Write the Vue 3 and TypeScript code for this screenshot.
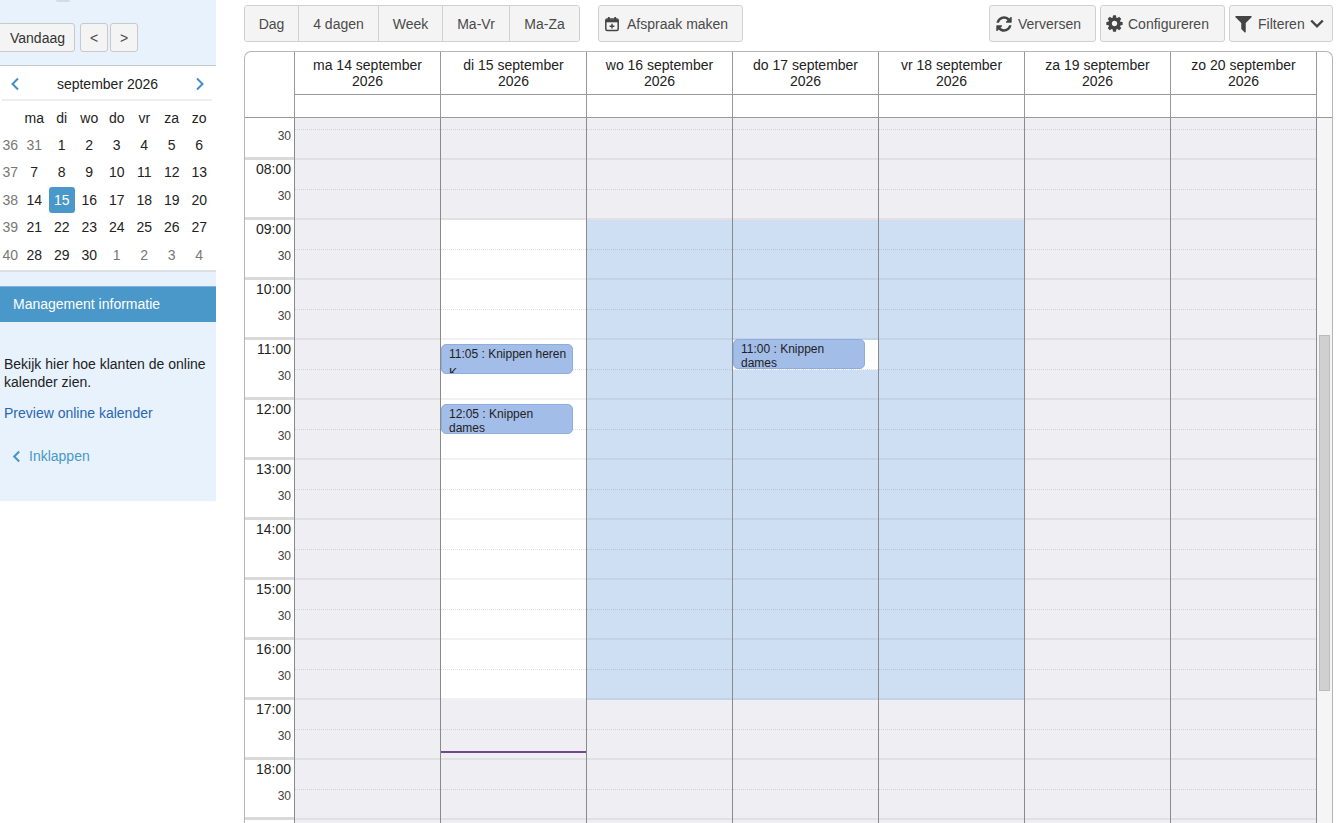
<script setup lang="ts">
type Kind = 'off' | 'work' | 'busy'
interface Ev { top: number; height: number; text: string; extra?: string }

const weekRows = [
  { wk: 36, days: [[31, 1], [1, 0], [2, 0], [3, 0], [4, 0], [5, 0], [6, 0]] },
  { wk: 37, days: [[7, 0], [8, 0], [9, 0], [10, 0], [11, 0], [12, 0], [13, 0]] },
  { wk: 38, days: [[14, 0], [15, 0], [16, 0], [17, 0], [18, 0], [19, 0], [20, 0]] },
  { wk: 39, days: [[21, 0], [22, 0], [23, 0], [24, 0], [25, 0], [26, 0], [27, 0]] },
  { wk: 40, days: [[28, 0], [29, 0], [30, 0], [1, 1], [2, 1], [3, 1], [4, 1]] },
]
const dayNames = ['ma', 'di', 'wo', 'do', 'vr', 'za', 'zo']
const viewButtons = ['Dag', '4 dagen', 'Week', 'Ma-Vr', 'Ma-Za']
const viewWidths = [54, 80, 64, 67, 69]

const columns = ['ma 14', 'di 15', 'wo 16', 'do 17', 'vr 18', 'za 19', 'zo 20']

const slots: number[] = []
for (let i = 14; i < 39; i++) slots.push(i)

const hourLabels: { label: string; half: boolean }[] = slots.map((s) => ({
  label: s === 14 || s === 38 ? '' : s % 2 === 0 ? `${String(s / 2).padStart(2, '0')}:00` : '30',
  half: s % 2 === 1,
}))

function kindOf(col: number, slot: number): Kind {
  const open = slot >= 18 && slot < 34
  if (!open) return 'off'
  if (col === 1) return 'work'
  if (col === 2 || col === 4) return 'busy'
  if (col === 3) return slot === 22 ? 'work' : 'busy'
  return 'off'
}

const events: Record<number, Ev[]> = {
  1: [
    { top: 244, height: 30, text: '11:05 : Knippen heren', extra: 'K' },
    { top: 304, height: 30, text: '12:05 : Knippen dames' },
  ],
  3: [{ top: 239, height: 30, text: '11:00 : Knippen dames' }],
}
</script>

<template>
  <div class="page">
    <aside class="side">
      <div class="side-top">
        <div class="stub"></div>
        <div class="nav-row">
          <button class="btn today">Vandaag</button>
          <button class="btn step">&lt;</button>
          <button class="btn step">&gt;</button>
        </div>
      </div>

      <div class="mini">
        <div class="mini-head">
          <svg class="arrow" viewBox="0 0 10 14"><path d="M8 1.500 2.500 7 8 12.500" /></svg>
          <span>september 2026</span>
          <svg class="arrow" viewBox="0 0 10 14"><path d="M2 1.500 7.500 7 2 12.500" /></svg>
        </div>
        <div class="mini-grid">
          <span></span>
          <span v-for="d in dayNames" :key="d" class="mini-cell">{{ d }}</span>
          <template v-for="r in weekRows" :key="r.wk">
            <span class="mini-cell wk">{{ r.wk }}</span>
            <span
              v-for="(d, i) in r.days"
              :key="i"
              class="mini-cell"
              :class="{ other: d[1] === 1, sel: d[0] === 15 }"
            >{{ d[0] }}</span>
          </template>
        </div>
      </div>

      <div class="mgmt">Management informatie</div>
      <div class="side-body">
        <p class="intro">Bekijk hier hoe klanten de online kalender zien.</p>
        <a class="preview">Preview online kalender</a>
        <div class="collapse">
          <svg class="arrow small" viewBox="0 0 10 14"><path d="M8 1.500 2.500 7 8 12.500" /></svg>
          <span>Inklappen</span>
        </div>
      </div>
    </aside>

    <main class="main">
      <div class="toolbar">
        <div class="group">
          <button
            v-for="(b, i) in viewButtons"
            :key="b"
            class="seg"
            :style="{ width: viewWidths[i] + 'px' }"
          >{{ b }}</button>
        </div>
        <button class="tool make">
          <svg class="ico" viewBox="0 0 16 16">
            <rect x="1.800" y="3" width="12.400" height="11.600" rx="1.500" fill="none" stroke="currentColor" stroke-width="1.500" />
            <path d="M1.800 3.500h12.400v2.800H1.800z" fill="currentColor" />
            <path d="M4.800 1v3M11.200 1v3" stroke="currentColor" stroke-width="1.800" />
            <path d="M8 7.800v4.800M5.600 10.200h4.800" stroke="currentColor" stroke-width="1.400" />
          </svg>
          Afspraak maken
        </button>
        <div class="spacer"></div>
        <button class="tool refresh">
          <svg class="ico" viewBox="0 0 1792 1792"><path fill="currentColor" d="M1639 1056q0 5-1 7-64 268-268 434.500t-478 166.500q-146 0-282.500-55t-243.500-157l-129 129q-19 19-45 19t-45-19-19-45v-448q0-26 19-45t45-19h448q26 0 45 19t19 45-19 45l-137 137q71 66 161 102t187 36q134 0 250-65t186-179q11-17 53-117 8-23 30-23h192q13 0 22.500 9.500t9.500 22.500zm25-800v448q0 26-19 45t-45 19h-448q-26 0-45-19t-19-45 19-45l138-138q-148-137-349-137-134 0-250 65t-186 179q-11 17-53 117-8 23-30 23h-199q-13 0-22.500-9.500t-9.500-22.500v-7q65-268 270-434.500t480-166.500q146 0 284 55.500t245 156.500l130-129q19-19 45-19t45 19 19 45z" /></svg>
          Verversen
        </button>
        <button class="tool config">
          <svg class="ico" viewBox="0 0 1792 1792"><path fill="currentColor" d="M1152 896q0-106-75-181t-181-75-181 75-75 181 75 181 181 75 181-75 75-181zm512-109v222q0 12-8 23t-20 13l-185 28q-19 54-39 91 35 50 107 138 10 12 10 25t-9 23q-27 37-99 108t-94 71q-12 0-26-9l-138-108q-44 23-91 38-16 136-29 186-7 28-36 28h-222q-14 0-24.500-8.500t-11.500-21.500l-28-184q-49-16-90-37l-141 107q-10 9-25 9-14 0-25-11-126-114-165-168-7-10-7-23 0-12 8-23 15-21 51-66.500t54-70.500q-27-50-41-99l-183-27q-13-2-21-12.500t-8-23.500v-222q0-12 8-23t19-13l186-28q14-46 39-92-40-57-107-138-10-12-10-24 0-10 9-23 26-36 98.500-107.500t94.500-71.500q13 0 26 10l138 107q44-23 91-38 16-136 29-186 7-28 36-28h222q14 0 24.500 8.500t11.500 21.500l28 184q49 16 90 37l142-107q9-9 24-9 13 0 25 10 129 119 165 170 7 8 7 22 0 12-8 23-15 21-51 66.500t-54 70.500q26 50 41 98l183 28q13 2 21 12.500t8 23.500z" /></svg>
          Configureren
        </button>
        <button class="tool filter">
          <svg class="ico" viewBox="0 0 1792 1792"><path fill="currentColor" d="M1595 295q17 41-14 70l-493 493v742q0 42-39 59-13 5-25 5-27 0-45-19l-256-256q-19-19-19-45v-486l-493-493q-31-29-14-70 17-39 59-39h1280q42 0 59 39z" /></svg>
          Filteren
          <svg class="chev" viewBox="0 0 14 9"><path d="M1.200 1.500 7 7.300l5.800-5.800" /></svg>
        </button>
      </div>

      <div class="cal">
        <div class="cal-head">
          <div class="head-gutter"></div>
          <div v-for="c in columns" :key="c" class="head-col">
            <div class="head-date">{{ c }} september<br />2026</div>
            <div class="head-all"></div>
          </div>
          <div class="head-end"></div>
        </div>

        <div class="cal-body">
          <div class="body-scroll">
            <div class="gutter">
              <div
                v-for="(h, i) in hourLabels"
                :key="i"
                class="gut-slot"
                :class="h.half ? 'gut-half' : 'gut-hour'"
              >{{ h.label }}</div>
            </div>
            <div v-for="(c, ci) in columns" :key="c" class="day">
              <div
                v-for="s in slots"
                :key="s"
                class="slot"
                :class="[kindOf(ci, s), s % 2 === 1 ? 'end-hour' : 'end-half']"
              ></div>
              <div
                v-for="(e, ei) in events[ci] || []"
                :key="ei"
                class="event"
                :style="{ top: e.top + 'px', height: e.height + 'px' }"
              >
                <div>{{ e.text }}</div>
                <div v-if="e.extra" class="event-extra">{{ e.extra }}</div>
              </div>
              <div v-if="ci === 1" class="now"></div>
            </div>
          </div>
          <div class="track"><div class="thumb"></div></div>
        </div>
      </div>
    </main>
  </div>
</template>

<style>
html, body { margin: 0; background: #fff; overflow: hidden; }
</style>

<style scoped>
.page {
  display: flex;
  width: 1344px;
  height: 823px;
  overflow: hidden;
  font-family: "Liberation Sans", Arial, sans-serif;
  font-size: 14px;
  color: #222;
  background: #fff;
}
.side { width: 216px; height: 501px; flex: none; background: #e8f2fd; display: flex; flex-direction: column; }
.side-top { height: 65px; border-bottom: 1px solid #c4c9cf; box-sizing: content-box; position: relative; }
.stub { position: absolute; left: 56px; top: 0; width: 14px; height: 2px; background: #d5dbe3; border-radius: 0 0 4px 4px; }
.nav-row { display: flex; padding-top: 23px; margin-left: -2px; }
button { font-family: inherit; font-size: 14px; color: #4a4a4a; cursor: pointer; }
.btn { height: 29px; padding: 0; background: #f4f4f4; border: 1px solid #c9c9c9; border-radius: 3px; }
.today { width: 77px; margin-right: 5px; color: #333; padding-left: 2px; }
.step { width: 28px; margin-right: 2px; }
.mini { background: #fff; height: 204px; border-bottom: 2px solid #dcdfe3; }
.mini-head { height: 31px; margin: 0 4px 0 2px; border-bottom: 2px solid #eeeeee; display: flex; align-items: center; justify-content: space-between; padding: 2px 7px 0 8px; box-sizing: content-box; }
.arrow { width: 10px; height: 14px; fill: none; stroke: #3d8fc6; stroke-width: 2; }
.arrow.small { width: 9px; height: 13px; stroke: #4a97c9; stroke-width: 2.400; }
.mini-grid { display: grid; grid-template-columns: 20.500px repeat(7, 27.500px); grid-auto-rows: 27.400px; padding-top: 3px; }
.mini-cell { display: flex; align-items: center; justify-content: center; color: #222; }
.mini-cell.wk { color: #777; }
.mini-cell.other { color: #777; }
.mini-cell.sel { background: #4a97c9; color: #fff; border-radius: 3px; margin: 1px; }
.mgmt { margin-top: 14px; height: 35px; line-height: 35px; padding-left: 13px; background: #4a97c9; color: #fff; border-top: 1px solid #7fb5d8; }
.side-body { padding: 33px 4px 0; }
.intro { margin: 0; line-height: 18px; color: #222; }
.preview { display: block; margin-top: 13px; color: #2a66b5; line-height: 18px; }
.collapse { display: flex; align-items: center; gap: 8px; margin: 25px 0 0 8px; color: #4a97c9; line-height: 18px; }

.main { width: 1089px; margin-left: 28px; flex: none; }
.toolbar { display: flex; align-items: flex-start; height: 51px; padding-top: 5px; box-sizing: border-box; }
.group { display: flex; height: 37px; border: 1px solid #d0d0d0; border-radius: 3px; background: #f4f4f4; box-sizing: border-box; overflow: hidden; }
.seg { height: 100%; padding: 0; background: #f4f4f4; border: 0; border-right: 1px solid #d0d0d0; flex: none; }
.seg:last-child { border-right: 0; }
.tool { height: 37px; padding: 0; display: flex; align-items: center; justify-content: flex-start; background: #f4f4f4; border: 1px solid #d0d0d0; border-radius: 3px; box-sizing: border-box; flex: none; }
.make { width: 145px; margin-left: 18px; gap: 7px; padding-left: 5px; }
.spacer { flex: 1; }
.refresh { width: 107px; gap: 5px; padding-left: 5px; }
.refresh .ico { width: 18px; height: 18px; }
.config { width: 125px; margin-left: 4px; gap: 4px; padding-left: 4px; }
.filter { width: 104px; margin-left: 4px; gap: 4px; padding-left: 3px; }
.filter .ico { width: 21px; height: 21px; }
.ico { width: 19px; height: 19px; color: #444; flex: none; }
.make .ico { width: 16px; height: 16px; }
.chev { width: 14px; height: 9px; fill: none; stroke: #444; stroke-width: 2.400; margin-left: 1px; }

.cal { height: 772px; box-sizing: border-box; border: 1px solid #b5b5b5; border-bottom: 0; border-radius: 7px 7px 0 0; overflow: hidden; display: flex; flex-direction: column; }
.cal-head { display: flex; height: 65px; flex: none; border-bottom: 1px solid #999; }
.head-gutter { width: 50px; box-sizing: border-box; border-right: 1px solid #999; }
.head-col { width: 146px; box-sizing: border-box; border-right: 1px solid #999; display: flex; flex-direction: column; }
.head-date { height: 43px; box-sizing: border-box; border-bottom: 1px solid #999; text-align: center; line-height: 16px; padding-top: 5px; }
.head-all { flex: 1; }
.head-end { flex: 1; }
.cal-body { display: flex; flex: 1; overflow: hidden; position: relative; }
.body-scroll { display: flex; align-items: flex-start; margin-top: -18px; }
.gutter { width: 50px; box-sizing: border-box; border-right: 1px solid #8a8a8a; }
.gut-slot { height: 30px; box-sizing: border-box; text-align: right; padding-right: 3px; }
.gut-hour { line-height: 19px; color: #222; }
.gut-half { font-size: 12px; line-height: 12px; color: #444; border-bottom: 3px solid #d9d9d9; }
.day { position: relative; width: 146px; box-sizing: border-box; border-right: 1px solid #8a8a8a; }
.slot { height: 30px; box-sizing: border-box; }
.off { background: #eeeef3; }
.work { background: #fff; }
.busy { background: #cfdff3; }
.end-half { border-bottom: 1px dotted rgba(0, 0, 0, 0.12); }
.end-hour { border-bottom: 2px solid rgba(0, 0, 0, 0.055); }
.event { position: absolute; left: 0; width: 132px; box-sizing: border-box; padding: 2px 4px 0 7px; background: #a3bde9; border: 1px solid #8fadd9; border-radius: 5px; font-size: 12px; line-height: 14px; overflow: hidden; color: #222; }
.event-extra { margin-top: 5px; }
.now { position: absolute; left: 0; right: 0; top: 651px; height: 2px; background: #6d4a8d; }
.track { position: relative; flex: 1; background: #f5f5f6; }
.thumb { position: absolute; left: 2px; top: 217px; width: 11px; height: 356px; background: #d0d0d0; border: 1px solid #bbb; box-sizing: border-box; }
</style>
